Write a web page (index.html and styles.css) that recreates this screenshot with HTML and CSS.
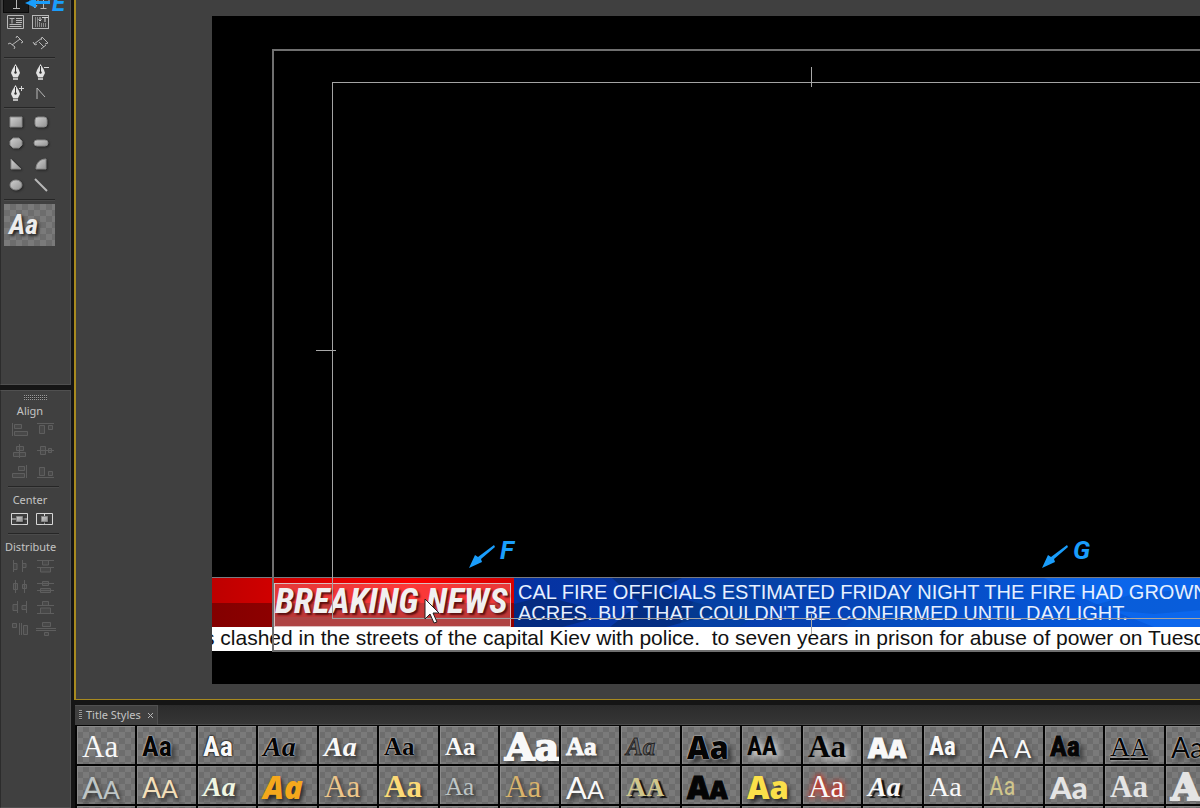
FILE: index.html
```html
<!DOCTYPE html>
<html lang="en">
<head>
<meta charset="utf-8">
<title>Title Designer</title>
<link rel="stylesheet" href="styles.css">
</head>
<body>
<div class="app">
  <aside class="side">
    <section class="panel tools" aria-label="Title tools">
      <div class="pair">
        <button class="tool active" aria-label="Type"><svg width="22" height="20"><path d="M6 1h11v3M6 4V1M11.500 1v16M8 17.500h7" class="ln"/></svg></button>
        <button class="tool" aria-label="Vertical type"><svg width="22" height="20"><path d="M8 8h11v3M8 11V8M13.500 8v9M10.500 17.500h6M5 5v11M3 14l2 3 2-3" class="ln"/></svg></button>
        <button class="tool" aria-label="Area type"><svg width="22" height="20"><path d="M2.500 3.500h16v13h-16zM4.500 6.500h5M7 6.500v5M11 6.500h6M11 8.500h6M11 10.500h6M4.500 12.500h12M4.500 14.500h12" class="ln"/></svg></button>
        <button class="tool" aria-label="Vertical area type"><svg width="22" height="20"><rect x="2.500" y="3.500" width="16" height="13" fill="#555" class="ln"/><path d="M5.500 5v10M7.500 5v10M9.500 10v5M11.500 11v4M13.500 11v4M15.500 11v4" stroke="#8a8a8a" fill="none"/><path d="M10 5v4M8.500 7.500L10 9l1.500-1.500M12 5.500h6M15 5v5" class="ln bright"/></svg></button>
        <button class="tool" aria-label="Path type"><svg width="22" height="20"><path d="M3 11l2-1 5 4-1 2M7 12l8-6M11 5l1-2 6 6-2 1" class="ln"/></svg></button>
        <button class="tool" aria-label="Vertical path type"><svg width="22" height="20"><path d="M3 9l2 3 2-1M4 11l8-6M11 7l1-3 6 6-3 1M9 9l5 5M11 16l5-4" class="ln"/></svg></button>
      </div>
      <hr>
      <div class="pair">
        <button class="tool" aria-label="Pen"><svg width="22" height="20"><use href="#nib"/></svg></button>
        <button class="tool" aria-label="Delete anchor point"><svg width="22" height="20"><use href="#nib"/><path d="M14 5.500h5" class="ln bright"/></svg></button>
        <button class="tool" aria-label="Add anchor point"><svg width="22" height="20"><use href="#nib"/><path d="M14 5.500h5M16.500 3v5" class="ln bright"/></svg></button>
        <button class="tool" aria-label="Convert anchor point"><svg width="22" height="20"><path d="M7 16V5l8 9" class="ln"/></svg></button>
      </div>
      <hr>
      <div class="pair">
        <button class="tool" aria-label="Rectangle"><svg width="22" height="20"><path d="M5 5h12v10H5z" class="shape"/></svg></button>
        <button class="tool" aria-label="Rounded rectangle"><svg width="22" height="20"><rect x="5" y="5" width="12" height="10" rx="3" class="shape"/></svg></button>
        <button class="tool" aria-label="Clipped rectangle"><svg width="22" height="20"><path d="M8 5h6l3 3v4l-3 3H8l-3-3V8z" class="shape"/></svg></button>
        <button class="tool" aria-label="Pill"><svg width="22" height="20"><rect x="4" y="7" width="14" height="6" rx="3" class="shape"/></svg></button>
        <button class="tool" aria-label="Wedge"><svg width="22" height="20"><path d="M6 5l10 10H6z" class="shape"/></svg></button>
        <button class="tool" aria-label="Arc"><svg width="22" height="20"><path d="M16 5v10H6C6 9 10 5 16 5z" class="shape"/></svg></button>
        <button class="tool" aria-label="Ellipse"><svg width="22" height="20"><ellipse cx="11" cy="10" rx="6" ry="5" class="shape"/></svg></button>
        <button class="tool" aria-label="Line"><svg width="22" height="20"><path d="M5 4l12 12" class="ln thick"/></svg></button>
      </div>
      <hr>
      <button class="preview checker" aria-label="Current style">Aa</button>
    </section>

    <section class="panel align">
      <div class="grip"></div>
      <h2>Align</h2>
      <div class="pair dim">
        <button class="tool" aria-label="Align left"><svg width="22" height="20"><path d="M3.500 3v13M5.500 4.500h7v4h-7zM5.500 11.500h13v4h-13z" class="ln"/></svg></button>
        <button class="tool" aria-label="Align top"><svg width="22" height="20"><path d="M3 3.500h17M5.500 5.500h5v8h-5zM14.500 5.500h4v4h-4z" class="ln"/></svg></button>
        <button class="tool" aria-label="Align horizontal centre"><svg width="22" height="20"><path d="M10.500 3v14M7.500 5.500h7v4h-7zM4.500 11.500h12v4h-12z" class="ln"/></svg></button>
        <button class="tool" aria-label="Align vertical centre"><svg width="22" height="20"><path d="M3 9.500h17M6.500 5.500h5v8h-5zM14.500 7.500h3v4h-3z" class="ln"/></svg></button>
        <button class="tool" aria-label="Align right"><svg width="22" height="20"><path d="M17.500 3v13M9.500 4.500h6v4h-6zM3.500 11.500h12v4h-12z" class="ln"/></svg></button>
        <button class="tool" aria-label="Align bottom"><svg width="22" height="20"><path d="M3 15.500h17M5.500 5.500h5v8h-5zM14.500 9.500h4v4h-4z" class="ln"/></svg></button>
      </div>
      <hr>
      <h2>Center</h2>
      <div class="pair">
        <button class="tool" aria-label="Center horizontally"><svg width="22" height="20"><path d="M2.500 4.500h16v11h-16zM3 10h5M14 10h5" class="ln bright"/><path d="M7.500 7.500h6v5h-6z" class="shape"/></svg></button>
        <button class="tool" aria-label="Center vertically"><svg width="22" height="20"><path d="M2.500 4.500h16v11h-16zM10.500 5v3M10.500 12v3" class="ln bright"/><path d="M7.500 7.500h6v5h-6z" class="shape"/></svg></button>
      </div>
      <hr>
      <h2>Distribute</h2>
      <div class="pair dim">
        <button class="tool" aria-label="Distribute left"><svg width="22" height="20"><path d="M4.500 4v12M5 7.500h3v6H5M13.500 4v12M14 7.500h3v4h-3" class="ln"/></svg></button>
        <button class="tool" aria-label="Distribute top"><svg width="22" height="20"><path d="M3 4.500h17M8.500 5v4h6V5M3 11.500h17M6.500 12v4h10v-4" class="ln"/></svg></button>
        <button class="tool" aria-label="Distribute horizontal centre"><svg width="22" height="20"><path d="M6.500 3v13M4.500 6.500h4v6h-4zM15.500 3v13M13.500 7.500h4v4h-4z" class="ln"/></svg></button>
        <button class="tool" aria-label="Distribute vertical centre"><svg width="22" height="20"><path d="M3 6.500h17M8.500 4.500h6v4h-6zM3 13.500h17M6.500 11.500h10v4h-10z" class="ln"/></svg></button>
        <button class="tool" aria-label="Distribute right"><svg width="22" height="20"><path d="M8.500 3v12M8 6.500H4v6h4M17.500 3v12M17 7.500h-4v4h4" class="ln"/></svg></button>
        <button class="tool" aria-label="Distribute bottom"><svg width="22" height="20"><path d="M3 7.500h17M8.500 7V3.500h6V7M3 15.500h17M6.500 15v-5h10v5" class="ln"/></svg></button>
        <button class="tool" aria-label="Even horizontal spacing"><svg width="22" height="20"><path d="M3.500 4.500h4v4h-4zM10.500 4v12M12.500 4v12M14.500 6.500h4v9h-4z" class="ln"/></svg></button>
        <button class="tool" aria-label="Even vertical spacing"><svg width="22" height="20"><path d="M8.500 3.500h8v4h-8zM2 9.500h20M2 11.500h20M10.500 13.500h4v3h-4z" class="ln"/></svg></button>
      </div>
    </section>
    <div class="note note-e"><svg width="25" height="12"><path d="M0 6l11-5v3h14v3H11v4z"/></svg><span>E</span></div>
  </aside>

  <main class="main">
    <section class="monitor">
      <div class="stage">
        <div class="lower-third">
          <div class="flag-red"></div>
          <div class="flag-blue">
            <svg class="flag-art" width="690" height="49" aria-hidden="true">
              <path d="M0 26l30-8 34 9 14 14-30 8H0z" fill="#04276b" opacity=".6"/>
              <path d="M98 0h70l-24 12 22 8 46 13-60 16H96l30-24z" fill="#03286f" opacity=".65"/>
              <path d="M190 6l54-6h60l-30 20-50 29h-60z" fill="#04439c" opacity=".5"/>
              <path d="M330 49l60-40 70 4-50 36z" fill="#0353c0" opacity=".4"/>
              <path d="M530 0h160v49H640l-60-24z" fill="#1378ff" opacity=".4"/>
              <path d="M570 30l50-14 70-6v22l-50 4z" fill="#0450c0" opacity=".4"/>
            </svg>
            <p class="headline">CAL FIRE OFFICIALS ESTIMATED FRIDAY NIGHT THE FIRE HAD GROWN<br>ACRES, BUT THAT COULDN'T BE CONFIRMED UNTIL DAYLIGHT.</p>
          </div>
        </div>
        <p class="ticker">s clashed in the streets of the capital Kiev with police.&nbsp; to seven years in prison for abuse of power on Tuesday</p>
        <div class="breaking">BREAKING NEWS</div>
        <div class="safe action"></div>
        <div class="safe title"></div>
        <i class="tick tick-top"></i><i class="tick tick-left"></i><i class="tick tick-bottom"></i>
        <svg class="pointer" width="16" height="28"><path d="M1 1v20l5-5 4 9 3-1-4-9h6z"/></svg>
        <div class="note note-f"><svg width="28" height="24"><use href="#arrow"/></svg><span>F</span></div>
        <div class="note note-g"><svg width="28" height="24"><use href="#arrow"/></svg><span>G</span></div>
      </div>
    </section>

    <section class="styles">
      <header class="tabs">
        <div class="tab"><span class="dots"></span>Title Styles<button class="close" aria-label="Close"><svg width="7" height="7"><path d="M1 1l5 5M6 1L1 6" class="ln"/></svg></button></div>
      </header>
      <div class="swatches">
        <button class="checker serif xl white">Aa</button>
        <button class="checker narrow l black halo">Aa</button>
        <button class="checker narrow l white edge">Aa</button>
        <button class="checker script l black halo">Aa</button>
        <button class="checker script l white drop">Aa</button>
        <button class="checker serif m bold black halo">Aa</button>
        <button class="checker serif m bold white drop">Aa</button>
        <button class="checker slab xxl white drop">Aa</button>
        <button class="checker serif m bold thickened white drop">Aa</button>
        <button class="checker script m outline">Aa</button>
        <button class="checker round xl black halo">Aa</button>
        <button class="checker narrow m black glow">AA</button>
        <button class="checker serif xl bold black glow">Aa</button>
        <button class="checker round l white thickened drop">A<small>A</small></button>
        <button class="checker narrow m white drop">Aa</button>
        <button class="checker sans l white drop">A <small>A</small></button>
        <button class="checker narrow l thickened black halo">Aa</button>
        <button class="checker serif l black halo under">A<small>A</small></button>
        <button class="checker sans l black halo">Aa</button>
        <button class="checker"></button>

        <button class="checker sans xl silver drop">A<small>A</small></button>
        <button class="checker sans l cream drop">A<small>A</small></button>
        <button class="checker serif l bold ital mint drop">Aa</button>
        <button class="checker round xl ital orange drop">Aa</button>
        <button class="checker serif xl sand drop">Aa</button>
        <button class="checker serif xl bold gold drop">Aa</button>
        <button class="checker serif m silver drop">Aa</button>
        <button class="checker serif xl tan drop">Aa</button>
        <button class="checker sans xl white drop">A<small>A</small></button>
        <button class="checker serif l bold khaki hard">A<small>A</small></button>
        <button class="checker round xl thickened black">A<small>A</small></button>
        <button class="checker round xl yellow drop">Aa</button>
        <button class="checker serif xl white redglow">Aa</button>
        <button class="checker serif l bold ital white hard">Aa</button>
        <button class="checker serif l white">Aa</button>
        <button class="checker narrow m light khaki">Aa</button>
        <button class="checker sans xl heavy pale">Aa</button>
        <button class="checker serif xl bold pale">Aa</button>
        <button class="checker slab xxl pale">Aa</button>
        <button class="checker"></button>

        <button class="checker"></button><button class="checker"></button><button class="checker"></button><button class="checker"></button><button class="checker"></button>
        <button class="checker"></button><button class="checker"></button><button class="checker"></button><button class="checker"></button><button class="checker"></button>
        <button class="checker"></button><button class="checker"></button><button class="checker"></button><button class="checker"></button><button class="checker"></button>
        <button class="checker"></button><button class="checker"></button><button class="checker"></button><button class="checker"></button><button class="checker"></button>
      </div>
    </section>
  </main>
</div>
<svg class="defs" width="0" height="0" aria-hidden="true">
  <linearGradient id="metal" x1="0" y1="0" x2="1" y2="1"><stop offset="0" stop-color="#d0d0d0"/><stop offset="1" stop-color="#929292"/></linearGradient>
  <symbol id="nib" viewBox="0 0 22 20"><path d="M10.500 2L14 8l1 3-2 4H8l-2-4 1-3z" fill="#e2e2e2"/><path d="M8 15.500h5v2.500H8z" fill="#bbb"/><path d="M10.500 4v6" stroke="#333"/><circle cx="10.500" cy="10.500" r="1.200" fill="#333"/></symbol>
  <symbol id="arrow" viewBox="0 0 28 24"><path d="M26 0l1 2-14 12 1 3-13 6 6-13 3 2z"/></symbol>
</svg>
</body>
</html>
```
FILE: styles.css
```css
* { box-sizing: border-box; }
body { margin: 0; background: #151515; font-family: "Noto Sans", "Open Sans", sans-serif; font-size: 11px; color: #c4c4c4; }
button { margin: 0; padding: 0; border: 0; background: none; color: inherit; font: inherit; }
h2, p { margin: 0; }
svg { display: block; }
.defs { position: absolute; }

.app { display: grid; grid-template-columns: 71px minmax(0, 1fr); column-gap: 3px; height: 100vh; overflow: hidden; }

/* Left column */
.side { position: relative; display: flex; flex-direction: column; gap: 5px; min-height: 0; overflow: hidden; }
.panel { background: #404040; border: 1px solid #505050; border-left-color: #2c2c2c; }
.tools { margin-top: -11px; padding: 1px 15px 138px 3px; }
.align { flex: 1; padding: 4px 10px 0 4px; }
.pair { display: grid; grid-template-columns: 25px 25px; grid-auto-rows: 21px; }
.align .pair { padding-left: 3px; }
hr { width: 51px; height: 2px; margin: 3px 0; border: 0; background: #262626; border-bottom: 1px solid #4b4b4b; }
.align hr { margin: 3px 3px; }
.tool { display: flex; align-items: flex-start; width: 24px; height: 21px; padding-left: 1px; }
.tool.active { background: #1b1b1b; box-shadow: 0 0 0 1px #0c0c0c; }
.ln { fill: none; stroke: #b8b8b8; }
.thick { stroke-width: 2; }
.bright { stroke: #d6d6d6; }
.shape { fill: url(#metal); stroke: #888; stroke-width: 1; filter: drop-shadow(1px 1px 1px #222); }
.dim .ln { stroke: #5e5e5e; fill: #484848; }
.panel h2 { height: 18px; font-size: 11px; font-weight: 400; line-height: 17px; text-align: center; width: 50px; }
.grip { width: 23px; height: 5px; margin-left: 19px; background: repeating-linear-gradient(90deg, transparent 0 1px, #404040 1px 2px), repeating-linear-gradient(#999 0 1px, #2c2c2c 1px 2px); }
.align .grip + h2 { margin-top: 2px; }
.preview { display: block; width: 51px; height: 42px; padding-left: 5px; text-align: left; font: bold italic 28px/42px "Liberation Sans Narrow", "Roboto Condensed", "Liberation Sans", sans-serif; color: #ececec; text-shadow: 2px 2px 3px #222; overflow: hidden; }
.checker { background: repeating-conic-gradient(#6d6d6d 0 25%, #7a7a7a 0 50%) 0 0 / 12px 12px; }

/* Monitor */
.main { display: grid; grid-template-rows: minmax(0, 1fr) 103px; row-gap: 5px; min-width: 0; min-height: 0; }
.monitor { padding: 16px 0 15px 136px; background: #404040; border: 2px solid #a88a20; border-width: 0 0 1px 2px; overflow: hidden; }
.stage { position: relative; display: flex; flex-direction: column; justify-content: flex-end; width: 1200px; height: 100%; padding-bottom: 33px; background: #000; overflow: hidden; }
.lower-third { display: grid; grid-template-columns: 302px 1fr; height: 50px; border-top: 1px solid #7a7a80; }
.flag-red { background: linear-gradient(transparent 25px, rgba(60, 0, 0, .45) 25px), linear-gradient(90deg, #bd0000, #fb0000 66%, #d80000); }
.flag-blue { position: relative; background: linear-gradient(90deg, #0531a0, #0643b4 35%, #0659dc 65%, #0a66ee); overflow: hidden; }
.flag-art { position: absolute; inset: 0 auto auto 0; }
.headline { position: relative; height: 42px; padding: 4px 0 0 4px; font: 20px/21px "Liberation Sans", Arial, sans-serif; color: #e6f0ff; white-space: nowrap; overflow: hidden; }
.ticker { height: 24px; background: #fff; color: #111; font: 21px/22px "Liberation Sans", Arial, sans-serif; white-space: nowrap; text-indent: -8px; }
.breaking { position: absolute; left: 62px; bottom: 57px; width: 237px; height: 44px; background: rgba(255, 140, 140, .4); border: 1px solid #dcbcbc; box-shadow: inset 0 -9px 0 rgba(160, 80, 80, .5); font: italic bold 35px/36px "Liberation Sans Narrow", "Roboto Condensed", "Liberation Sans", sans-serif; color: #f0f0f0; text-shadow: 2px 2px 2px #5a0f0f; white-space: nowrap; }
.safe { position: absolute; border: 1px solid #a4a4a4; }
.action { inset: 33px 5% 32px; border: 2px solid #6f6f6f; }
.title { inset: 66px 10% 65px; }
.tick { position: absolute; background: #a8a8a8; }
.tick-top { right: 50%; top: 51px; width: 1px; height: 20px; }
.tick-left { left: 104px; top: 50%; width: 20px; height: 1px; }
.tick-bottom { right: 50%; bottom: 50px; width: 1px; height: 20px; }
.pointer { position: absolute; left: 212px; bottom: 58px; fill: #fff; stroke: #222; }

/* Callouts */
.note { position: absolute; display: flex; gap: 4px; color: #1a9dfb; fill: #1a9dfb; font: italic bold 26px/26px Roboto, "Open Sans", sans-serif; }
.note-e { left: 25px; top: -10px; gap: 2px; align-items: center; font-size: 24px; }
.note-f { left: 256px; bottom: 115px; }
.note-g { left: 829px; bottom: 115px; }
.note-f svg, .note-g svg { margin-top: 8px; }

/* Title styles */
.styles { margin-left: 1px; min-width: 0; overflow: hidden; }
.tabs { height: 20px; background: linear-gradient(#2b2b2b, #363636); border-bottom: 1px solid #4a4a4a; }
.tab { display: inline-flex; align-items: center; gap: 4px; height: 20px; padding: 0 3px 1px 4px; line-height: 18px; background: #404040; border: 1px solid #505050; border-width: 1px 1px 0 0; }
.dots { width: 3px; height: 10px; background: repeating-linear-gradient(#999 0 1px, #333 1px 2px); }
.close { margin-left: 2px; }
.swatches { display: grid; grid-template-columns: repeat(10, 58px 59px); grid-auto-rows: 38px; gap: 2px; padding: 1px 2px 0; background: #050505; }
.swatches .checker { padding-left: 5px; text-align: left; line-height: 42px; white-space: nowrap; overflow: hidden; box-shadow: inset 1px 1px 0 #8a8a8a; }
.swatches small { font-size: 25px; }
.serif { font-family: "Liberation Serif", serif; }
.sans { font-family: Lato, sans-serif; }
.narrow { font-family: "Liberation Sans Narrow", "Roboto Condensed", "DejaVu Serif Condensed", serif; font-weight: 700; }
.script { font-family: "Liberation Serif", serif; font-style: italic; font-weight: 700; }
.slab { font-family: "DejaVu Serif", serif; font-weight: 700; -webkit-text-stroke: 2px; }
.round { font-family: "Open Sans", sans-serif; font-weight: 800; }
.m { font-size: 25px; }
.l { font-size: 28px; }
.xl { font-size: 31px; }
.xxl { font-size: 38px; }
.bold { font-weight: 700; }
.heavy { font-weight: 900; }
.light { font-weight: 400; }
.thickened { -webkit-text-stroke: 1px; }
.ital { font-style: italic; }
.under { text-decoration: underline; }
.white { color: #f8f8f8; }
.black { color: #050505; }
.pale { color: #e4e4e4; }
.silver { color: #bfc6c6; }
.cream { color: #f3dfb9; }
.mint { color: #eef6e2; }
.orange { color: #f5a81c; }
.sand { color: #ecc58a; }
.gold { color: #fbd977; }
.tan { color: #d9b36c; }
.khaki { color: #d0c68c; }
.yellow { color: #fbe04a; }
.outline { color: #666; -webkit-text-stroke: 1px #222; text-shadow: 0 0 2px #ddd; }
.halo { text-shadow: 0 0 2px #ddd, 0 0 1px #ddd, 4px 4px 5px #333; }
.edge { text-shadow: 0 0 2px #000, 0 0 2px #000; }
.drop { text-shadow: 2px 3px 4px #222; }
.hard { text-shadow: 3px 2px 1px #111; }
.glow { text-shadow: 3px 3px 7px #eee; }
.redglow { text-shadow: 0 0 7px #e02818, 0 0 5px #e02818; }
```
